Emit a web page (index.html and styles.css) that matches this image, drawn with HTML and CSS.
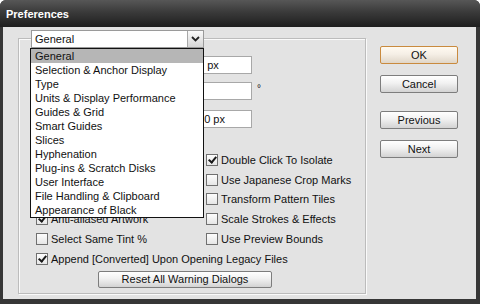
FILE: index.html
```html
<!DOCTYPE html>
<html>
<head>
    <title>Preferences</title>
    <link rel="stylesheet" href="styles.css">
</head>
<body>
    <div class="window">
        <div class="titlebar">Preferences</div>
        <div class="client">
            <div class="group">
                <div class="select">
                    <span class="select-value">General</span>
                    <span class="select-arrow">
                        <svg width="9" height="6" viewBox="0 0 9 6"><polyline points="1,1 4.5,4.5 8,1" fill="none" stroke="#222" stroke-width="1.8"/></svg>
                    </span>
                </div>
                <ul class="list">
                    <li class="active">General</li>
                    <li>Selection &amp; Anchor Display</li>
                    <li>Type</li>
                    <li>Units &amp; Display Performance</li>
                    <li>Guides &amp; Grid</li>
                    <li>Smart Guides</li>
                    <li>Slices</li>
                    <li>Hyphenation</li>
                    <li>Plug-ins &amp; Scratch Disks</li>
                    <li>User Interface</li>
                    <li>File Handling &amp; Clipboard</li>
                    <li>Appearance of Black</li>
                </ul>

                <div class="fields">
                    <div class="field-row"><span class="field"><span class="covered">1 </span>px</span></div>
                    <div class="field-row"><span class="field"></span><span class="unit">°</span></div>
                    <div class="field-row"><span class="field"><span class="covered">2</span>0 px</span></div>
                </div>

                <div class="checks">
                    <label class="check covered"><span class="box"></span>Disable Auto Add/Delete</label>
                    <label class="check"><span class="box on"></span>Double Click To Isolate</label>
                    <label class="check covered"><span class="box"></span>Use Precise Cursors</label>
                    <label class="check"><span class="box"></span>Use Japanese Crop Marks</label>
                    <label class="check covered"><span class="box on"></span>Show Tool Tips</label>
                    <label class="check"><span class="box"></span>Transform Pattern Tiles</label>
                    <label class="check"><span class="box on"></span>Anti-aliased Artwork</label>
                    <label class="check"><span class="box"></span>Scale Strokes &amp; Effects</label>
                    <label class="check"><span class="box"></span>Select Same Tint %</label>
                    <label class="check"><span class="box"></span>Use Preview Bounds</label>
                    <label class="check wide"><span class="box on"></span>Append [Converted] Upon Opening Legacy Files</label>
                </div>

                <button class="btn reset">Reset All Warning Dialogs</button>
            </div>

            <div class="actions">
                <button class="btn default">OK</button>
                <button class="btn">Cancel</button>
                <button class="btn spaced">Previous</button>
                <button class="btn">Next</button>
            </div>
        </div>
    </div>
</body>
</html>
```

FILE: styles.css
```css
body {
    margin: 0;
    background-color: #ffffff;
    font-family: "Liberation Sans", Arial, sans-serif;
    font-size: 11px;
    color: #111;
}
.window {
    width: 480px;
    height: 304px;
    background-color: #363636;
    border-radius: 6px 6px 0 0;
    display: flex;
    flex-direction: column;
    overflow: hidden;
}
.titlebar {
    height: 27px;
    line-height: 29px;
    padding-left: 6px;
    color: #fff;
    font-weight: bold;
    background: linear-gradient(#575757, #3a3a3a 45%, #1e1e1e);
}
.client {
    flex: 1;
    margin: 0 4px 5px 3px;
    background-color: #e3e3e3;
    display: flex;
    padding: 11px 0 0 15px;
}
.group {
    position: relative;
    width: 346px;
    height: 254px;
    border: 1px solid #bcbcbc;
    box-shadow: inset 1px 1px 0 #fafafa, 1px 1px 0 #fafafa;
    display: flex;
    flex-direction: column;
}
/* hidden behind the open list */
.covered {
    visibility: hidden;
}
.check.covered {
    visibility: hidden;
}
.select {
    position: absolute;
    left: 12px;
    top: -9px;
    width: 171px;
    height: 16px;
    background-color: #fff;
    border: 1px solid #9a9a9a;
    display: flex;
    align-items: center;
}
.select-value {
    flex: 1;
    padding-left: 3px;
}
.select-arrow {
    width: 15px;
    height: 16px;
    border-left: 1px solid #a8a8a8;
    background: linear-gradient(#fafafa, #d6d6d6);
    display: flex;
    align-items: center;
    justify-content: center;
}
.list {
    position: absolute;
    left: 11px;
    top: 9px;
    width: 172px;
    margin: 0;
    padding: 0;
    list-style: none;
    background-color: #fff;
    border: 1px solid #111;
    z-index: 2;
}
.list li {
    height: 14px;
    line-height: 14px;
    padding-left: 4px;
    white-space: nowrap;
}
.list li.active {
    background-color: #b6b6b6;
}
.fields {
    margin-left: 175px;
    margin-top: 17px;
}
.field-row {
    display: flex;
    align-items: center;
    height: 18px;
    margin-bottom: 8px;
}
.field-row:nth-child(2) {
    margin-bottom: 10px;
}
.field {
    width: 53px;
    height: 16px;
    line-height: 16px;
    padding-left: 3px;
    background-color: #fff;
    border: 1px solid #a8a8a8;
}
.unit {
    margin-left: 5px;
    font-size: 10px;
    margin-top: -6px;
}
.checks {
    margin-top: 14px;
    padding-left: 17px;
    display: grid;
    grid-template-columns: 170px 1fr;
    grid-auto-rows: 19.8px;
}
.check {
    display: flex;
    align-items: center;
    white-space: nowrap;
}
.check.wide {
    grid-column: 1 / 3;
}
.box {
    width: 10px;
    height: 10px;
    margin-right: 3px;
    border: 1px solid #707070;
    background: linear-gradient(#fdfdfd, #e6e6e6);
    position: relative;
}
.box.on::after {
    content: "";
    position: absolute;
    left: 3px;
    top: 0px;
    width: 3px;
    height: 6px;
    border: solid #1a1a1a;
    border-width: 0 2px 2px 0;
    transform: rotate(40deg);
}
.btn {
    font-family: "Liberation Sans", Arial, sans-serif;
    font-size: 11px;
    color: #111;
    height: 18px;
    padding: 0;
    border: 1px solid #7d7d7d;
    border-radius: 2px;
    background: linear-gradient(#ffffff, #f1f1f1 45%, #d3d3d3);
}
.reset {
    margin-top: 2px;
    margin-left: 79px;
    width: 174px;
    height: 17px;
}
.actions {
    display: flex;
    flex-direction: column;
    gap: 11px;
    margin-left: 14px;
    padding-top: 8px;
}
.actions .btn {
    width: 78px;
}
.actions .spaced {
    margin-top: 7px;
}
.btn.default {
    border-color: #c98a3e;
    background: linear-gradient(#fffaf0, #f5efe6 45%, #e0d6c8);
}
```
